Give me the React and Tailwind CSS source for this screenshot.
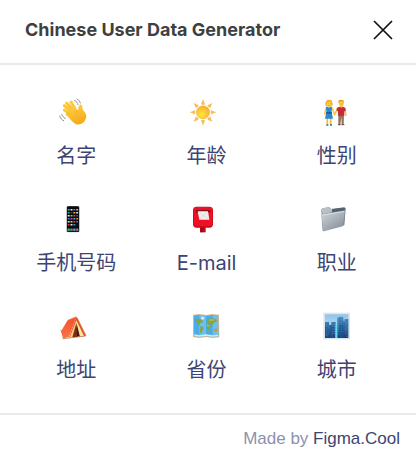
const defs = (
  <defs>
    <linearGradient id="skin" x1="0" y1="0" x2="0.4" y2="1">
      <stop offset="0" stopColor="#ffd54a" />
      <stop offset="1" stopColor="#f5ab1c" />
    </linearGradient>
    <radialGradient id="sun" cx="0.4" cy="0.65" r="0.65">
      <stop offset="0" stopColor="#ffea3c" />
      <stop offset="1" stopColor="#f7ae2e" />
    </radialGradient>
    <linearGradient id="folder" x1="0" y1="0" x2="0.8" y2="1">
      <stop offset="0" stopColor="#d3d8dd" />
      <stop offset="1" stopColor="#868e97" />
    </linearGradient>
    <linearGradient id="tent" x1="0" y1="0" x2="0" y2="1">
      <stop offset="0" stopColor="#f4502f" />
      <stop offset="1" stopColor="#f87445" />
    </linearGradient>
    <linearGradient id="sky" x1="0" y1="0" x2="0" y2="1">
      <stop offset="0" stopColor="#8fc4e8" />
      <stop offset="1" stopColor="#d5f1fb" />
    </linearGradient>
    <linearGradient id="tower" x1="0" y1="0" x2="0" y2="1">
      <stop offset="0" stopColor="#4a8cc4" />
      <stop offset="1" stopColor="#173f78" />
    </linearGradient>
  </defs>
);

const Wave = () => (
  <svg viewBox="28 24 84 84" className="size-7" aria-hidden="true">
    <g fill="none" stroke="#fdc936" strokeLinecap="round">
      <path d="M65 62 44 47" strokeWidth="9" />
      <path d="M68 58 51 39" strokeWidth="9" />
      <path d="M76 56 64 36" strokeWidth="9" />
      <path d="M63 72 44 60" strokeWidth="9" />
      <path d="M66 82 52 73" strokeWidth="9" />
    </g>
    <path d="M54 69 58 50 70 50 84 60C87 60 84 48 91 44c5-2 8 2 7 8-1 5 3 10 9 17 5 7 3 17-2 24-6 9-18 13-27 9-7-3-16-13-23-23-4-5-4-7-1-10Z" fill="url(#skin)" />
    <path d="M48 52 61 62M57 45 68 58M49 65 60 73M84 61c-5 2-7 6-6 12" fill="none" stroke="#e09a1b" strokeWidth="1.2" />
    <path d="M75 32c6 2 9 7 10 12M82 27c6 3 9 8 10 12M30 78c2 7 6 12 12 14M36 73c2 6 6 10 11 12" fill="none" stroke="#85898d" strokeWidth="2.8" strokeLinecap="round" />
  </svg>
);

const Sun = () => (
  <svg viewBox="30 24 84 84" className="size-7" aria-hidden="true">
    <g fill="#f9bd55">
      {[0, 45, 90, 135, 180, 225, 270, 315].map((a) => (
        <path key={a} d="M72 27 78 43Q72 46 66 43Z" transform={`rotate(${a} 72 67)`} />
      ))}
    </g>
    <circle cx="72" cy="67" r="22" fill="#fff" />
    <circle cx="72" cy="67" r="20" fill="url(#sun)" stroke="#f2a52d" />
  </svg>
);

const Couple = () => (
  <svg viewBox="32 24 84 84" className="size-7" aria-hidden="true">
    <path d="M54 82v23M64 82v23" stroke="#f9bc2d" strokeWidth="5" />
    <path d="M51 105h6M62 105h6" stroke="#1a79b5" strokeWidth="4" />
    <path d="M50 55 46 72M69 55 76 74M84 56 76 74M106 56 110 76" stroke="#fbc33a" strokeWidth="4.5" strokeLinecap="round" />
    <path d="M50 50h18l-1 16 4 20H47l4-20Z" fill="#2c88d3" />
    <path d="M51 66h16l1 5H50Z" fill="#175f9f" />
    <path d="M54 49h10l-5 6Z" fill="#fbc33a" />
    <path d="M49 47c-2-9 1-17 10-17s12 8 10 17Z" fill="#ed9c16" />
    <ellipse cx="59" cy="41" rx="7.5" ry="8.5" fill="#ffd044" />
    <path d="M52 37c5 0 9-1 11-4l4 5V31l-9-2-7 5Z" fill="#f3ad22" />
    <path d="M87 74h17l-1 30h-6l-1-24-3 24h-6Z" fill="#967258" />
    <path d="M86 104h8M97 104h8" stroke="#5b4438" strokeWidth="3" />
    <path d="M83 53 91 50h9l8 3 1 10-4 1v13H86V64l-4-1Z" fill="#c62a37" />
    <path d="M91 49h9l-4 6Z" fill="#f4b92c" />
    <ellipse cx="96" cy="40" rx="8" ry="9" fill="#ffcf43" />
    <path d="M87 39c-1-7 2-10 8-10 7 0 11 4 9 10l-3-5-11 1Z" fill="#e99a17" />
    <path d="M56 41h1M62 41h1M93 40h1M99 40h1" stroke="#644015" strokeWidth="2" />
    <path d="M57 46h5M94 45h5" stroke="#c15827" strokeWidth="1.3" />
  </svg>
);

const APPS = [
  ["#43c65b", "#e6e9ec", "#a556c8", "#b5bcc4"],
  ["#27a9d8", "#383f48", "#f0ad32", "#dfe3e8"],
  ["#e7e9ed", "#e2a329", "#d64440", "#49515c"],
  ["#3184e4", "#d943a2", "#2bbbd5", "#f27a35"],
  ["#dde3ea", "#f4ce3e", "#e8483e", "#8d52c5"],
  ["#d84050", "#e5e8ea", "#2f9ad3", "#16191d"],
];

const Phone = () => (
  <svg viewBox="28 24 84 84" className="size-7" aria-hidden="true">
    <rect x="50" y="27" width="40" height="79" rx="5" fill="#a5a8aa" />
    <rect x="52" y="28" width="36" height="77" rx="4" fill="#080b0e" />
    {APPS.flatMap((row, r) =>
      row.map((fill, c) => (
        <rect key={`${r}-${c}`} x={54 + c * 8.5} y={36 + r * 9} width="6" height="4.5" rx="1" fill={fill} />
      ))
    )}
    <rect x="53" y="94" width="34" height="9" rx="2" fill="#343a40" />
    {["#49cd58", "#4b8fe3", "#3bcc79", "#d95ac2"].map((fill, c) => (
      <rect key={fill} x={54 + c * 8.5} y="95" width="6" height="6" rx="1" fill={fill} />
    ))}
  </svg>
);

const Postbox = () => (
  <svg viewBox="30 24 84 84" className="size-7" aria-hidden="true">
    <path d="M63 87h17v19H63Z" fill="#b60d19" />
    <path d="M66 90h4v16h-4Z" fill="#771019" />
    <rect x="42" y="29" width="60" height="63" rx="11" fill="#c60918" />
    <rect x="44" y="30" width="56" height="58" rx="9" fill="#ef1023" />
    <rect x="51" y="40" width="43" height="6" rx="2" fill="#61121b" />
    <path d="M56 43h31l4 25H61Z" fill="#f1f0ef" />
    <path d="m61 67 12-11 18 12M57 44l16 12 14-12" fill="none" stroke="#c5c3c4" strokeWidth="1.3" />
  </svg>
);

const Folder = () => (
  <svg viewBox="32 24 84 84" className="size-7" aria-hidden="true">
    <path d="M36 39 39 34 60 31 65 36 105 31l4 3-4 50-64 18Z" fill="#66727e" />
    <path d="M36 39 39 34 60 31 65 36 70 37 68 46 40 52Z" fill="#b7c0c8" />
    <path d="M68 37 104 32l3 3-1 8-38 6Z" fill="#52626f" />
    <path d="M38 52 104 41q4-1 3 4l-5 39q0 3-4 4L44 102q-4 1-4-4l-3-42q0-3 1-4Z" fill="url(#folder)" stroke="#86919b" />
    <path d="m39 54 66-11" stroke="#eef1f3" strokeWidth="2" />
  </svg>
);

const Tent = () => (
  <svg viewBox="28 24 84 84" className="size-7" aria-hidden="true">
    <path d="m33 78 11 21M82 41l27 54M39 104 108 96" stroke="#9b5431" strokeWidth="2" />
    <path d="M54 49 80 38 58 98 40 104 34 82Z" fill="url(#tent)" />
    <path d="M80 38 108 95 58 101Z" fill="#e94528" />
    <path d="M80 48 103 95 60 101Z" fill="#f5d16d" />
    <path d="M80 58 85 98 68 100Z" fill="#7c2d1c" />
    <path d="M81 60 91 97H82Z" fill="#421a18" />
    <path d="M81 52 101 95 91 97Z" fill="#fae49a" />
    <path d="M54 49 80 38" stroke="#f67b4d" strokeWidth="2" />
  </svg>
);

const WorldMap = () => (
  <svg viewBox="39 24 84 84" className="size-7" aria-hidden="true">
    <path d="m42 32 19-2 20 3 20-3 19 2 1 68-20 2-20-3-20 3-19-3Z" fill="#d7b58d" />
    <path d="m45 35 16-2 20 3 20-3 16 2 1 61-17 2-20-3-20 3-16-3Z" fill="#48ade9" />
    <path d="m61 33 20 3v59l-20 3ZM101 33l16 2 1 61-17 2Z" fill="#7cccf2" opacity=".65" />
    <path d="M47 48 52 44 64 45 73 50 68 57 64 57 61 64 56 61 53 53ZM64 66 72 69 74 75 69 82 67 91 63 84ZM82 52 88 44 103 43 115 48 111 54 106 55 101 64 97 59 92 62 86 58ZM82 61 92 62 97 66 92 75 88 81 84 72Z" fill="#84a54c" />
    <path d="m104 76 8-3 4 6-4 4-8-2Z" fill="#bd9b40" />
    <path d="m67 38 7 0 3 5-6 5-5-4Z" fill="#e1e5df" />
    <path d="M90 48h15M84 64l7 2" stroke="#d8c33f" strokeWidth="3" />
    <path d="M46 93 61 96 81 93 101 96 117 94" fill="none" stroke="#d5edf4" strokeWidth="4" />
  </svg>
);

const City = () => (
  <svg viewBox="41 24 84 84" className="size-7" aria-hidden="true">
    <rect x="42" y="26" width="80" height="80" fill="#dce6e8" />
    <rect x="47" y="31" width="70" height="71" fill="url(#sky)" />
    <path d="M47 54h12v8h7v-8h13v48H47ZM84 42l7-4 11 2v10h4v-5h11v57H84Z" fill="url(#tower)" />
    <path d="M48 68h9v34h-9ZM65 65h8v37h-8ZM91 62h10v40H91Z" fill="#1c568f" opacity=".75" />
    <path d="M51 59v38M56 63v30M69 60v35M75 60v30M88 47v48M96 46v38M109 51v37M113 55v44" stroke="#77b9df" strokeWidth="2" strokeDasharray="2 5" />
    <path d="M79 61h4v41h-5Z" fill="#5ddbf2" />
  </svg>
);

const FIELDS = [
  { label: "名字", Icon: Wave, trailing: true },
  { label: "年龄", Icon: Sun, trailing: true },
  { label: "性别", Icon: Couple, trailing: true },
  { label: "手机号码", Icon: Phone, trailing: true },
  { label: "E-mail", Icon: Postbox, trailing: true },
  { label: "职业", Icon: Folder, trailing: true },
  { label: "地址", Icon: Tent, trailing: true },
  { label: "省份", Icon: WorldMap, trailing: false },
  { label: "城市", Icon: City, trailing: false },
];

export default function App() {
  return (
    <div className="flex min-h-screen flex-col bg-white font-['Inter','Noto_Sans_CJK_SC',sans-serif]">
      <svg className="absolute size-0" aria-hidden="true">{defs}</svg>
      <header className="flex h-[65px] items-center justify-between border-b-2 border-[#e9e9e9] pr-[21px] pl-[25px] pb-1">
        <h1 className="text-lg font-bold text-[#3f3f3f]">Chinese User Data Generator</h1>
        <button type="button" aria-label="Close" className="flex size-6 items-center justify-center text-[#111]">
          <svg viewBox="0 0 20 20" className="size-5" fill="none" stroke="currentColor" strokeWidth="1.7" aria-hidden="true">
            <path d="m1 1 18 18M19 1 1 19" />
          </svg>
        </button>
      </header>
      <main className="grid flex-1 grid-cols-3 content-start gap-y-[35px] pt-[33px] pr-[14px] pb-[29px] pl-[11px]">
        {FIELDS.map(({ label, Icon, trailing }) => (
          <button key={label} type="button" className="flex flex-col items-center gap-4 text-xl leading-7 text-[#3d4474]">
            <span className={trailing ? "pr-1.5" : ""}>
              <Icon />
            </span>
            <span>{label}</span>
          </button>
        ))}
      </main>
      <footer className="flex h-[45px] items-center justify-end border-t-2 border-[#e9e9e9] px-4 pt-1 font-['Liberation_Sans',Arial,sans-serif] text-[17px] text-[#8e90b1]">
        <p>
          Made by{" "}
          <a href="#figma-cool" className="text-[#3d4474]">Figma.Cool</a>
        </p>
      </footer>
    </div>
  );
}
